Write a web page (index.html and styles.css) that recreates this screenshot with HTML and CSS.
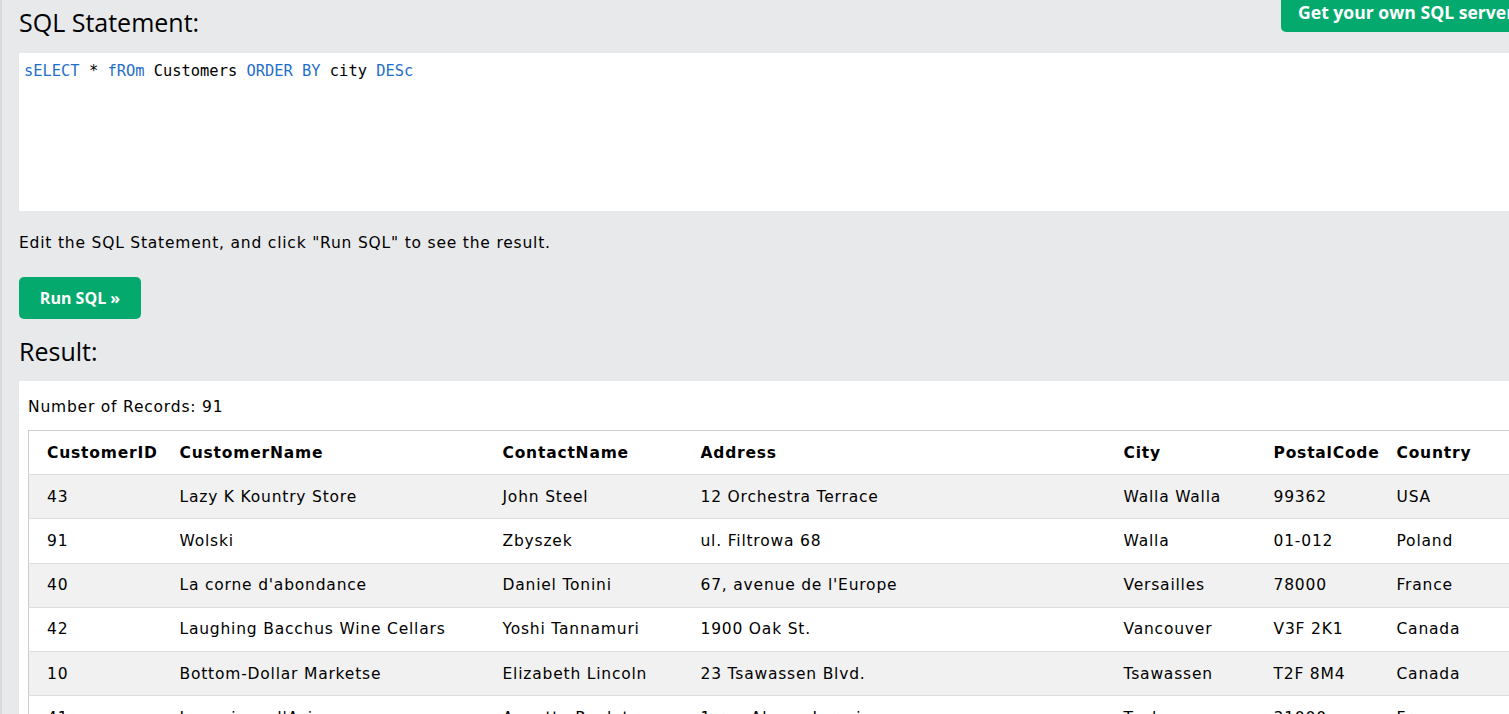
FILE: index.html
```html
<!DOCTYPE html>
<html lang="en">
<head>
<meta charset="utf-8">
<title>SQL Tryit Editor</title>
<link rel="stylesheet" href="styles.css">
</head>
<body>
<div class="page">
  <main class="main">
    <div class="toprow">
      <h3 class="heading">SQL Statement:</h3>
      <a class="server-btn" href="#">Get your own SQL server</a>
    </div>
    <div class="editor"><code class="code"><span class="kw">sELECT</span> * <span class="kw">fROm</span> Customers <span class="kw">ORDER BY</span> city <span class="kw">DESc</span></code></div>
    <p class="hint">Edit the SQL Statement, and click "Run SQL" to see the result.</p>
    <button class="run-btn" type="button">Run SQL »</button>
    <h3 class="heading result-heading">Result:</h3>
    <div class="result">
      <div class="count">Number of Records: 91</div>
      <table class="data">
        <colgroup>
          <col class="c1"><col class="c2"><col class="c3"><col class="c4"><col class="c5"><col class="c6"><col class="c7">
        </colgroup>
        <thead>
          <tr><th>CustomerID</th><th>CustomerName</th><th>ContactName</th><th>Address</th><th>City</th><th>PostalCode</th><th>Country</th></tr>
        </thead>
        <tbody>
          <tr><td>43</td><td>Lazy K Kountry Store</td><td>John Steel</td><td>12 Orchestra Terrace</td><td>Walla Walla</td><td>99362</td><td>USA</td></tr>
          <tr><td>91</td><td>Wolski</td><td>Zbyszek</td><td>ul. Filtrowa 68</td><td>Walla</td><td>01-012</td><td>Poland</td></tr>
          <tr><td>40</td><td>La corne d'abondance</td><td>Daniel Tonini</td><td>67, avenue de l'Europe</td><td>Versailles</td><td>78000</td><td>France</td></tr>
          <tr><td>42</td><td>Laughing Bacchus Wine Cellars</td><td>Yoshi Tannamuri</td><td>1900 Oak St.</td><td>Vancouver</td><td>V3F 2K1</td><td>Canada</td></tr>
          <tr><td>10</td><td>Bottom-Dollar Marketse</td><td>Elizabeth Lincoln</td><td>23 Tsawassen Blvd.</td><td>Tsawassen</td><td>T2F 8M4</td><td>Canada</td></tr>
          <tr><td>41</td><td>La maison d'Asie</td><td>Annette Roulet</td><td>1 rue Alsace-Lorraine</td><td>Toulouse</td><td>31000</td><td>France</td></tr>
        </tbody>
      </table>
    </div>
  </main>
</div>
</body>
</html>
```
FILE: styles.css
```css
html, body {
  margin: 0;
  padding: 0;
  height: 100%;
  overflow: hidden;
  background: #e7e9eb;
}

.page {
  border-left: 2px solid #d9dadb;
  padding-left: 17px;
  min-height: 100%;
  font-family: "DejaVu Sans", Verdana, sans-serif;
  font-size: 15.5px;
  letter-spacing: 0.8px;
  color: #000;
}

.main {
  width: 1512px;
}

.toprow {
  display: flex;
  align-items: flex-start;
  height: 53px;
}

.heading {
  margin: 0;
  font-family: "Open Sans", "Segoe UI", sans-serif;
  font-weight: 400;
  font-size: 25px;
  line-height: 35px;
  letter-spacing: 0;
  color: #000;
}

.toprow .heading {
  padding-top: 5px;
}

.server-btn {
  margin-left: auto;
  width: 250px;
  height: 32px;
  box-sizing: border-box;
  padding: 0 0 0 17px;
  background: #04aa6d;
  color: #fff;
  text-decoration: none;
  font-family: "Open Sans", "Source Sans Pro", sans-serif;
  font-weight: 700;
  font-size: 17.6px;
  line-height: 24px;
  letter-spacing: 0;
  border-radius: 0 0 0 5px;
  white-space: nowrap;
}

.editor {
  background: #fff;
  height: 158px;
  box-sizing: border-box;
  padding: 8px 5px;
  letter-spacing: 0;
}

.code {
  font-family: "DejaVu Sans Mono", Consolas, monospace;
  font-size: 15.4px;
  line-height: 20px;
  color: #000;
}

.kw {
  color: #1f6fca;
}

.hint {
  margin: 21px 0 23px;
  line-height: 22px;
}

.run-btn {
  display: block;
  width: 122px;
  height: 42px;
  border: 0;
  border-radius: 5px;
  background: #04aa6d;
  color: #fff;
  font-family: "Open Sans", "Source Sans Pro", sans-serif;
  font-weight: 700;
  font-size: 16px;
  letter-spacing: 0;
  padding: 0;
  cursor: pointer;
}

.result-heading {
  margin: 15px 0 12px;
}

.result {
  background: #fff;
  padding: 15px 9px 40px;
}

.count {
  line-height: 22px;
  margin-bottom: 12px;
}

.data {
  border-collapse: collapse;
  table-layout: fixed;
  border: 1px solid #ccc;
  width: 1500px;
}

.c1 { width: 143px; }
.c2 { width: 323px; }
.c3 { width: 198px; }
.c4 { width: 423px; }
.c5 { width: 150px; }
.c6 { width: 123px; }
.c7 { width: 140px; }

.data th,
.data td {
  text-align: left;
  padding: 10.5px 8px;
  line-height: 22.2px;
  border-bottom: 1px solid #ddd;
  white-space: nowrap;
  overflow: hidden;
}

.data th {
  padding-top: 11px;
  padding-bottom: 10px;
  font-weight: 700;
  background: #fff;
}

.data th:first-child,
.data td:first-child {
  padding-left: 18px;
}

.data tbody tr:nth-child(odd) td {
  background: #f1f1f1;
}
```
